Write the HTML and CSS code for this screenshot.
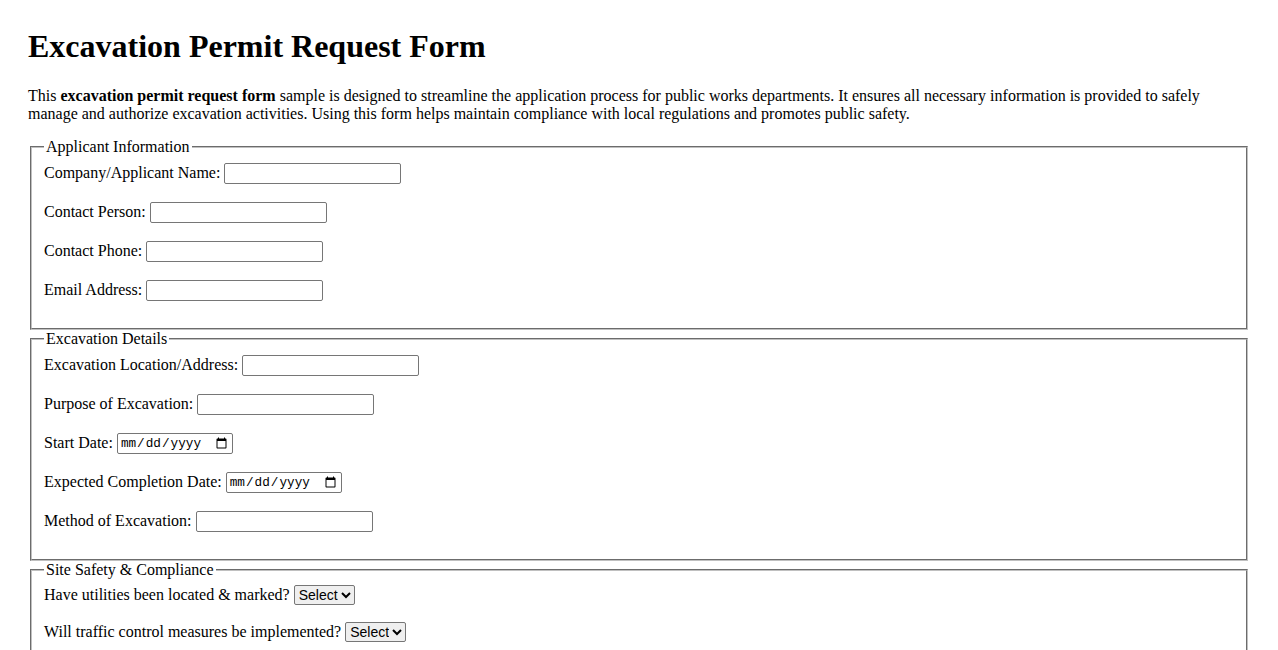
FILE: index.html
```html
<!DOCTYPE html>
<html lang="en">
<head>
<meta charset="utf-8">
<title>Excavation Permit Request Form</title>
<link rel="stylesheet" href="styles.css">
</head>
<body class="page">
<h1 class="title">Excavation Permit Request Form</h1>
<p class="intro">This <strong>excavation permit request form</strong> sample is designed to streamline the application process for public works departments. It ensures all necessary information is provided to safely manage and authorize excavation activities. Using this form helps maintain compliance with local regulations and promotes public safety.</p>
<form class="permit-form">
  <fieldset class="group">
    <legend>Applicant Information</legend>
    <div class="row"><label for="company">Company/Applicant Name:</label> <input class="field" type="text" id="company"></div>
    <div class="row"><label for="contact">Contact Person:</label> <input class="field" type="text" id="contact"></div>
    <div class="row"><label for="phone">Contact Phone:</label> <input class="field" type="tel" id="phone"></div>
    <div class="row"><label for="email">Email Address:</label> <input class="field" type="email" id="email"></div>
  </fieldset>
  <fieldset class="group">
    <legend>Excavation Details</legend>
    <div class="row"><label for="location">Excavation Location/Address:</label> <input class="field" type="text" id="location"></div>
    <div class="row"><label for="purpose">Purpose of Excavation:</label> <input class="field" type="text" id="purpose"></div>
    <div class="row"><label for="start">Start Date:</label> <input class="date" type="date" id="start"></div>
    <div class="row"><label for="end">Expected Completion Date:</label> <input class="date" type="date" id="end"></div>
    <div class="row"><label for="method">Method of Excavation:</label> <input class="field" type="text" id="method"></div>
  </fieldset>
  <fieldset class="group group-select">
    <legend>Site Safety &amp; Compliance</legend>
    <div class="row row-select"><label for="utilities">Have utilities been located &amp; marked?</label> <select class="choice" id="utilities"><option>Select</option><option>Yes</option><option>No</option></select></div>
    <div class="row row-select"><label for="traffic">Will traffic control measures be implemented?</label> <select class="choice" id="traffic"><option>Select</option><option>Yes</option><option>No</option></select></div>
    <div class="row row-select"><label for="shoring">Will shoring or trench protection be used?</label> <select class="choice" id="shoring"><option>Select</option><option>Yes</option><option>No</option></select></div>
  </fieldset>
</form>
</body>
</html>
```
FILE: styles.css
```css
html, body {
  margin: 0;
  padding: 0;
}
.page {
  padding: 28px 28px 28px;
  font-family: "Liberation Serif", "Times New Roman", serif;
  font-size: 16px;
  color: #000;
  background: #fff;
}
.title {
  font-size: 32px;
  font-weight: bold;
  margin: 0 0 22px;
  line-height: 37px;
}
.intro {
  margin: 0 0 15px;
}
.group {
  margin: 0 2px;
  padding: 0 12px 9px;
  border: 2px groove #c0c0c0;
}
.group legend {
  padding: 0 2px;
}
.row {
  height: 21px;
  margin: 0 0 18px;
}
.row:first-of-type {
  margin-top: 7px;
}
.row-select {
  height: 19px;
}
.group-select .row:first-of-type {
  margin-top: 6px;
}
.field {
  width: 177px;
  height: 21px;
  box-sizing: border-box;
  font-family: "Liberation Sans", Arial, sans-serif;
  font-size: 13.33px;
  border: 1px solid #767676;
  border-radius: 2px;
  padding: 1px 2px;
}
.date {
  width: 116px;
  height: 21px;
  box-sizing: border-box;
  font-family: "Liberation Mono", monospace;
  font-size: 12.7px;
  border: 1px solid #767676;
  border-radius: 2px;
  padding: 1px 2px;
  vertical-align: 1px;
}
.choice {
  font-family: "Liberation Sans", Arial, sans-serif;
  font-size: 14px;
  height: 20px;
  border: 1px solid #767676;
  border-radius: 2px;
}
```
